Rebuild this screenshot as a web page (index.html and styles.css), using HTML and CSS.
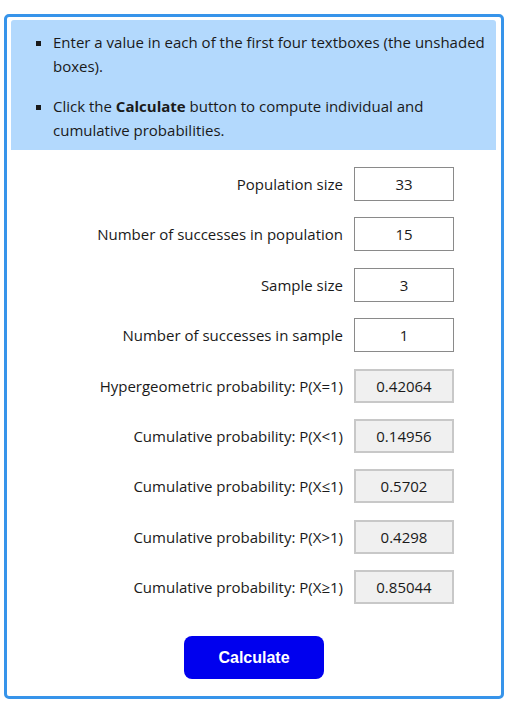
FILE: index.html
```
<!DOCTYPE html>
<html>
<head>
<meta charset="utf-8">
<link rel="stylesheet" href="styles.css">
</head>
<body>
<div class="calc">
  <div class="info">
    <ul>
      <li>Enter a value in each of the first four textboxes (the unshaded boxes).</li>
      <li>Click the <b>Calculate</b> button to compute individual and cumulative probabilities.</li>
    </ul>
  </div>
  <div class="form">
    <label>Population size</label><div class="box">33</div>
    <label>Number of successes in population</label><div class="box">15</div>
    <label>Sample size</label><div class="box">3</div>
    <label>Number of successes in sample</label><div class="box">1</div>
    <label>Hypergeometric probability: P(X=1)</label><div class="box out">0.42064</div>
    <label>Cumulative probability: P(X&lt;1)</label><div class="box out">0.14956</div>
    <label>Cumulative probability: P(X≤1)</label><div class="box out">0.5702</div>
    <label>Cumulative probability: P(X&gt;1)</label><div class="box out">0.4298</div>
    <label>Cumulative probability: P(X≥1)</label><div class="box out">0.85044</div>
  </div>
  <div class="actions">
    <button class="btn">Calculate</button>
  </div>
</div>
</body>
</html>
```
FILE: styles.css
```
html, body {
  margin: 0;
  padding: 0;
  background: #fff;
}
body {
  padding: 14px 5px 10px 4px;
  font-family: "Open Sans", "Noto Sans", sans-serif;
  font-size: 15px;
  color: #1a1a1a;
}
.calc {
  border: 3px solid #3794ea;
  border-radius: 5px;
  padding: 3px 5px 17px 4px;
}
.info {
  background: #b3d9fd;
  border-radius: 3px 3px 0 0;
  padding: 10px 10px 8px 0;
}
.info ul {
  margin: 0;
  padding-left: 42px;
  list-style: square;
  line-height: 24px;
}
.info li + li {
  margin-top: 16px;
}
.form {
  display: grid;
  grid-template-columns: 1fr 100px;
  column-gap: 11px;
  row-gap: 16.4px;
  align-items: center;
  padding: 17px 42px 0 0;
}
.form label {
  text-align: right;
}
.box {
  height: 34px;
  box-sizing: border-box;
  border: 1px solid #8a8a8a;
  display: flex;
  align-items: center;
  justify-content: center;
  background: #fff;
}
.box.out {
  background: #f0f0f0;
  border: 2px solid #c8c8c8;
}
.actions {
  display: flex;
  justify-content: center;
  padding-top: 32px;
}
.btn {
  width: 140px;
  height: 43px;
  border: none;
  border-radius: 8px;
  background: #0000ee;
  color: #fff;
  font-family: "Liberation Sans", Arial, sans-serif;
  font-weight: bold;
  font-size: 16px;
  margin-left: 1px;
}
```
